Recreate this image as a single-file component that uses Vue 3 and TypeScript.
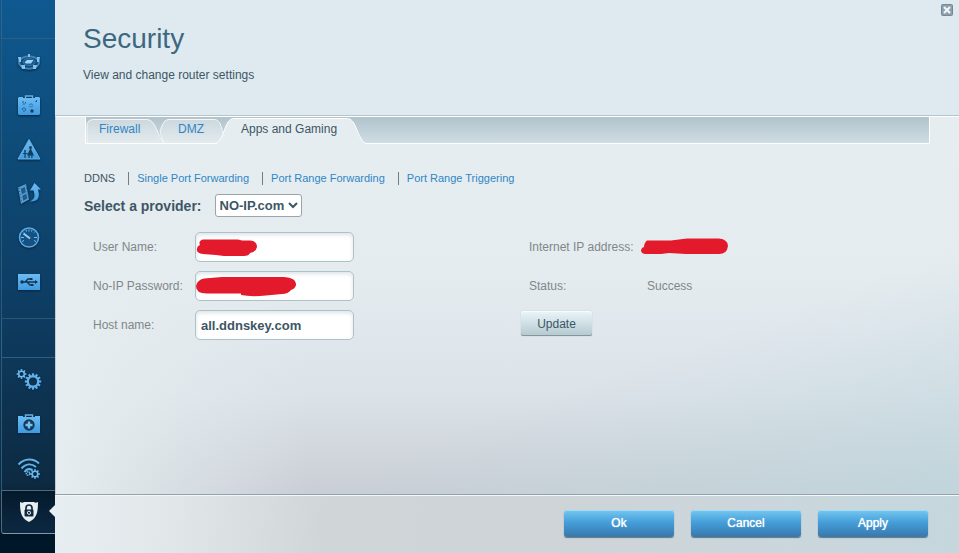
<script setup lang="ts">
import { ref } from 'vue'

const tabs = ['Firewall', 'DMZ', 'Apps and Gaming']
const tabKeys = ['firewall', 'dmz', 'apps']
const activeTab = ref(2)

const sections = ['DDNS', 'Single Port Forwarding', 'Port Range Forwarding', 'Port Range Triggering']
const activeSection = ref(0)

const provider = ref('NO-IP.com')
const userName = ref('')
const password = ref('')
const hostName = ref('all.ddnskey.com')
const status = ref('Success')

const bigTeeth = Array.from({ length: 12 }, (_, i) => i * 30)
const smallTeeth = Array.from({ length: 8 }, (_, i) => i * 45)
</script>

<template>
  <div class="shell">
    <svg class="defs" aria-hidden="true">
      <defs>
        <linearGradient id="ice" x1="0" y1="0" x2="0" y2="1">
          <stop offset="0" stop-color="#6cbcf4" />
          <stop offset="1" stop-color="#3f9be0" />
        </linearGradient>
        <linearGradient id="tabFill" x1="0" y1="0" x2="0" y2="1">
          <stop offset="0" stop-color="#ccd8de" />
          <stop offset="1" stop-color="#e3ebee" />
        </linearGradient>
        <g id="gearBig">
          <rect v-for="a in bigTeeth" :key="a" x="-1.1" y="-8.2" width="2.2" height="3" :transform="`rotate(${a})`" fill="#5fb0ea" />
          <circle r="5.2" fill="none" stroke="#5fb0ea" stroke-width="2.4" />
        </g>
        <g id="gearSmall">
          <rect v-for="a in smallTeeth" :key="a" x="-0.8" y="-4.9" width="1.6" height="2.2" :transform="`rotate(${a})`" fill="#6cb8ee" />
          <circle r="2.8" fill="none" stroke="#6cb8ee" stroke-width="1.6" />
        </g>
      </defs>
    </svg>

    <nav class="sidebar" aria-label="Router">
      <div class="spacer"></div>
      <div class="group tools">
        <a href="#" aria-label="Network map">
          <svg width="26" height="26" viewBox="0 0 26 26">
            <ellipse cx="13" cy="13.500" rx="10" ry="6.200" fill="#12497a" stroke="#3f83b6" stroke-width="2" />
            <ellipse cx="13" cy="13" rx="6" ry="3.500" fill="#1b598d" stroke="#3579ad" />
            <path d="M8.500 13.500l2.500-2.500h6.500l-2.500 3.500H10z" fill="#9bd4f8" />
            <path d="M2 8h3v5H3zM21 8h3l-1 5h-2zM12 5h2v3h-2zM5 16h4v4H6zM17 16h4l-1 4h-3z" fill="#81c3ef" />
          </svg>
        </a>
        <a href="#" aria-label="Guest access">
          <svg width="26" height="26" viewBox="0 0 26 26">
            <path d="M9.500 5v-2h7v2" fill="none" stroke="#65b1e7" stroke-width="1.400" />
            <path d="M3 4h4v1h12V4h4l1 1v16l-1 1H3l-1-1V5z" fill="url(#ice)" />
            <path d="M6 9h3l1 1-1 1H6M7 15h2.500v3H7l-1-3M15 10.500l2 2-2 2-2-2z" fill="none" stroke="#1b6297" stroke-width="1" stroke-dasharray="2 1" />
            <circle cx="16" cy="18" r="1.700" fill="#153e5e" />
            <path d="M19 8.500l2-1.500v2z" fill="#153e5e" />
          </svg>
        </a>
        <a href="#" aria-label="Parental controls">
          <svg width="26" height="26" viewBox="0 0 26 26">
            <path d="M13 2.500L24 22H2z" fill="url(#ice)" stroke="#65b1e7" stroke-linejoin="round" />
            <circle cx="14.500" cy="10.500" r="1.500" fill="#153e5e" />
            <path d="M14 12h1l3 6.500h-1.500V21h-1.200v-2.500h-1.600V21h-1.200v-2.500H11z" fill="#153e5e" />
            <circle cx="9" cy="14" r="1" fill="#153e5e" />
            <path d="M9 15v6M7 16.500h4.500" stroke="#153e5e" stroke-width="1.200" />
          </svg>
        </a>
        <a href="#" aria-label="Media prioritization">
          <svg width="26" height="26" viewBox="0 0 26 26">
            <path d="M2 6.500L10 3l3 15.500L5 23z" fill="#579dd0" />
            <path d="M4.800 7.800l4-1.900 1.100 5.300-4 2zM6.200 14.800l4-2 1.100 4.700-4 2.200z" fill="#215b89" />
            <path d="M3 7l3 15M10 4l3 14" stroke="#1f608f" stroke-dasharray="1 2" />
            <path d="M14 20.500c9 .5 10-5 8-12h3L18.500 2 14 9.500h3.500c2 6 1 8.500-3.500 11z" fill="url(#ice)" />
          </svg>
        </a>
        <a href="#" aria-label="Speed test">
          <svg width="26" height="26" viewBox="0 0 26 26">
            <circle cx="13" cy="12.500" r="9.500" fill="#155282" stroke="#57aae4" stroke-width="1.600" />
            <path d="M5 12.500h3M18 12.500h3M13 4.500v2M7 6.500l1 1M19 6.500l-1 1M6 16.500l2-1M20 16.500l-2-1M10 5l.5 1.500M16 5l-.5 1.500" stroke="#73bdf0" />
            <path d="M7.500 8.500L14 13.500" stroke="#92d0f8" stroke-width="2" />
          </svg>
        </a>
        <a href="#" aria-label="USB storage">
          <svg width="26" height="26" viewBox="0 0 26 26">
            <path d="M2 5h22v16H2z" fill="url(#ice)" />
            <path d="M5 13h15M9 13l3-3h3M11 13l3 3h2" fill="none" stroke="#12344f" stroke-width="1.300" />
            <circle cx="6" cy="13" r="1.700" fill="#12344f" />
            <path d="M19 11l3 2-3 2zM14 9h2.500v2H14zM15 15h2.500v2H15z" fill="#12344f" />
          </svg>
        </a>
      </div>
      <div class="spacer"></div>
      <div class="group">
        <a href="#" aria-label="Connectivity">
          <svg width="26" height="26" viewBox="0 0 26 26">
            <use href="#gearSmall" x="5.500" y="7" />
            <use href="#gearBig" x="17" y="14.500" />
          </svg>
        </a>
        <a href="#" aria-label="Troubleshooting">
          <svg width="26" height="26" viewBox="0 0 26 26">
            <path d="M9.500 6V4h7v2" fill="none" stroke="#65b1e7" stroke-width="1.500" />
            <path d="M2 5h5v1h12V5h5v17H2z" fill="url(#ice)" />
            <circle cx="13" cy="14" r="5.700" fill="#133a5a" />
            <path d="M13 10.500v7M9.500 14h7" stroke="#75bff2" stroke-width="2.400" />
          </svg>
        </a>
        <a href="#" aria-label="Wireless">
          <svg width="26" height="26" viewBox="0 0 26 26">
            <path d="M2.500 9.500c6-6.500 15-6.500 20.500-1M5.500 13.500c4.500-5 10-5 14.500-1.500M8.500 17c2-3 5-3.500 8-2" fill="none" stroke="#64b1e9" stroke-width="2" />
            <circle cx="12" cy="18.500" r="1.700" fill="none" stroke="#64b1e9" stroke-width="1.500" stroke-dasharray="1.500 .5" />
            <use href="#gearSmall" x="19" y="19" />
          </svg>
        </a>
      </div>
      <a class="current" href="#" aria-label="Security" aria-current="page">
        <svg width="26" height="26" viewBox="0 0 26 26">
          <path d="M4 3c2 1 3 1 4 0h10c1 1 2 1 4 0 0 10-1 16-9 20C5 19 4 13 4 3z" fill="#e9eef1" />
          <path d="M10 11V9c0-4 6-4 6 0v2" fill="none" stroke="#102b40" stroke-width="1.700" />
          <rect x="8.500" y="10.500" width="9" height="7" rx="1" fill="#102b40" />
          <circle cx="13" cy="13.800" r="1.600" fill="none" stroke="#e9eef1" />
        </svg>
      </a>
    </nav>

    <main class="panel">
      <header class="head">
        <h1>Security</h1>
        <p>View and change router settings</p>
        <button class="close" type="button" aria-label="Close">
          <svg width="12" height="12" viewBox="0 0 12 12">
            <rect x=".5" y=".5" width="11" height="11" rx="1" fill="#8ea1ac" stroke="#72889a" />
            <path d="M3 3l6 6M9 3L3 9" stroke="#f1f6f8" stroke-width="2.200" />
          </svg>
        </button>
      </header>

      <section class="body">
        <div class="tabs" role="tablist">
          <button
            v-for="(tab, i) in tabs"
            :key="tab"
            type="button"
            role="tab"
            class="tab"
            :class="[tabKeys[i], { selected: activeTab === i }]"
            :aria-selected="activeTab === i"
            @click="activeTab = i"
          >
            <svg v-if="i === 0" class="shape" width="80" height="26" viewBox="0 0 80 26">
              <path d="M1 26V9Q1 2.500 8 2.500H61C70 2.500 71 19 78 26z" fill="url(#tabFill)" />
              <path d="M1 26V9Q1 2.500 8 2.500H61C70 2.500 71 19 78 26" fill="none" stroke="#f3f7f9" />
            </svg>
            <svg v-else-if="i === 1" class="shape" width="68" height="26" viewBox="0 0 68 26">
              <path d="M5 26Q2 21 1 14C4 6 5 2.500 11 2.500H55C61 2.500 62 9 64 16L66 26z" fill="url(#tabFill)" />
              <path d="M5 26Q2 21 1 14C4 6 5 2.500 11 2.500H55C61 2.500 62 9 64 16" fill="none" stroke="#f3f7f9" />
            </svg>
            <svg v-else class="shape" width="148" height="27" viewBox="0 0 148 27">
              <path d="M0 27V25.500C8 22 7 1.500 17 1.500H130C139 1.500 139 17 147 25.500H148V27z" fill="#e6edf0" />
              <path d="M0 25.500C8 22 7 1.500 17 1.500H130C139 1.500 139 17 147 25.500H148" fill="none" stroke="#fff" />
            </svg>
            <span>{{ tab }}</span>
          </button>
        </div>

        <nav class="sections" aria-label="Apps and Gaming">
          <a
            v-for="(s, i) in sections"
            :key="s"
            href="#"
            :class="{ here: activeSection === i }"
            @click.prevent="activeSection = i"
          >{{ s }}</a>
        </nav>

        <div class="provider">
          <label for="provider">Select a provider:</label>
          <select id="provider" v-model="provider">
            <option>NO-IP.com</option>
          </select>
        </div>

        <form class="form" @submit.prevent>
          <div class="fields">
            <label for="user">User Name:</label>
            <div class="field">
              <input id="user" v-model="userName" type="text" />
              <svg class="mark" width="64" height="20" viewBox="0 0 64 20">
                <path d="M7 1.500H42L46 2.500H54Q61 3 61 9 60 14 54 15 53 18 48 18H28L20 17 7 16Q0 15 1 11 1 8 4 7 2 3 7 1.500z" fill="#e3192c" />
              </svg>
            </div>
            <label for="pass">No-IP Password:</label>
            <div class="field">
              <input id="pass" v-model="password" type="password" />
              <svg class="mark" width="102" height="20" viewBox="0 0 102 20">
                <path d="M8 1.500L26 0H88Q101 1 100 8 99 12 95 13 92 17 86 17L70 18.500Q55 20 45 18V16.500H12Q0 17 0 9 1 3 8 1.500z" fill="#e3192c" />
              </svg>
            </div>
            <label for="host">Host name:</label>
            <div class="field">
              <input id="host" v-model="hostName" type="text" />
            </div>
          </div>

          <div class="info">
            <div class="row">
              <span class="key">Internet IP address:</span>
              <svg width="88" height="18" viewBox="0 0 88 18">
                <path d="M6 2.500L30 2.500 46 .5H78Q87 1.500 87 8 86 16 78 16H45L28 15 20 16H5Q0 16 0 12 1 9 3 9 3 5 6 2.500z" fill="#e3192c" />
              </svg>
            </div>
            <div class="row">
              <span class="key">Status:</span>
              <span class="value">{{ status }}</span>
            </div>
            <button class="update" type="button">Update</button>
          </div>
        </form>
      </section>

      <footer class="foot">
        <button type="button">Ok</button>
        <button type="button">Cancel</button>
        <button type="button">Apply</button>
      </footer>
    </main>
  </div>
</template>

<style>
body {
  margin: 0;
}
</style>

<style scoped>
.shell {
  display: flex;
  min-height: 100vh;
  font: 12px/16px "Liberation Sans", Arial, sans-serif;
  color: #3d5665;
}
.shell *,
.shell {
  box-sizing: border-box;
}
.defs {
  position: absolute;
  width: 0;
  height: 0;
}
button,
input,
select {
  font-family: inherit;
}
button {
  cursor: pointer;
}

.sidebar {
  flex: none;
  display: flex;
  flex-direction: column;
  width: 55px;
  padding-left: 1px;
  background: linear-gradient(#0f5990 0, #0e4c7a 140px, #0e3d63 300px, #0d2b43 480px, #001729 534px);
}
.spacer {
  height: 39px;
  border-left: 1px solid #2e648a;
  border-bottom: 1px solid #2b5f85;
}
.group {
  border-left: 1px solid #2b5a7b;
  border-bottom: 1px solid #50697b;
}
.tools {
  padding: 1px 0 14px;
  border-bottom-color: #2c5676;
}
.group a,
.current {
  display: flex;
  align-items: center;
  justify-content: center;
  height: 44px;
}
.group svg {
  filter: drop-shadow(0 1px 1px #06233b);
}
.current {
  position: relative;
  height: 43px;
  border-left: 1px solid #51697a;
  border-bottom: 1px solid #8796a0;
  border-bottom-left-radius: 3px;
  background: linear-gradient(#041a2c, #0c2942);
}
.current::after {
  content: "";
  position: absolute;
  right: 0;
  top: 14px;
  border: 6px solid transparent;
  border-left: 0;
  border-right-color: #e9eef1;
}

.panel {
  flex: 1;
  display: flex;
  flex-direction: column;
  min-width: 0;
}
.head {
  position: relative;
  height: 116px;
  padding: 23px 28px 0;
  border-bottom: 1px solid #b7c4ca;
  background: #dfeaf0;
}
h1 {
  margin: 0;
  font-size: 28px;
  line-height: 32px;
  font-weight: 400;
  color: #3d677f;
}
.head p {
  margin: 12px 0 0;
}
.close {
  position: absolute;
  top: 4px;
  right: 6px;
  display: flex;
  padding: 0;
  border: 0;
  background: none;
}

.body {
  flex: 1;
  padding: 0 29px;
  border-top: 1px solid #fff;
  border-left: 1px solid #c3cbcf;
  background:
    linear-gradient(90deg, #e5edf0, rgba(229, 237, 240, 0) 28%),
    linear-gradient(160deg, rgba(190, 216, 223, 0) 65%, rgba(190, 216, 223, 0.7) 100%),
    linear-gradient(#e6edf0 0, #e5ecef 40%, #e1e8ed 56%, #dbe2e8 74%, #c9ced4 100%);
}
.tabs {
  display: flex;
  height: 27px;
  border: 1px solid #fff;
  border-top: 0;
  background: linear-gradient(#b1c3cb, #cfdde4);
}
.tab {
  position: relative;
  height: 27px;
  padding: 0 0 2px;
  border: 0;
  background: none;
  font-size: 12px;
  line-height: 25px;
  color: #2f86c6;
  text-align: left;
}
.tab span {
  position: relative;
}
.tab.selected {
  color: #3d5665;
  z-index: 1;
}
.shape {
  position: absolute;
  left: 0;
  top: 0;
}
.firewall {
  width: 73px;
  padding-left: 13px;
}
.dmz {
  width: 58px;
  padding-left: 19px;
}
.apps {
  width: 148px;
  padding-left: 24px;
}

.sections {
  display: flex;
  margin-top: 28px;
  margin-left: -1px;
  font-size: 11px;
  line-height: 13px;
}
.sections a {
  margin-right: 13px;
  color: #2f86c6;
  text-decoration: none;
}
.sections a + a {
  padding-left: 8px;
  border-left: 1px solid #717d84;
}
.sections .here {
  color: #3d5665;
}

.provider {
  display: flex;
  align-items: center;
  gap: 13px;
  margin-top: 9px;
  margin-left: -1px;
  font-size: 14px;
  font-weight: 700;
}
.provider select {
  width: 87px;
  height: 23px;
  padding: 0;
  border: 1px solid #9ba4a9;
  border-radius: 3px;
  background-color: #fff;
  color: #3d5665;
  font-size: 13px;
  font-weight: 700;
}

.form {
  display: grid;
  grid-template-columns: 428px 1fr;
  margin-top: 15px;
  padding-left: 8px;
  color: #818789;
}
.fields {
  display: grid;
  grid-template-columns: 102px 159px;
  row-gap: 9px;
  align-items: center;
  align-content: start;
}
.field {
  position: relative;
}
.field input {
  display: block;
  width: 100%;
  height: 30px;
  padding: 0 5px;
  border: 1px solid #afc1c8;
  border-radius: 5px;
  background: #fff;
  box-shadow: inset 0 2px 4px #dce3e6;
  color: #3d5665;
  font-size: 13px;
  font-weight: 700;
}
.mark {
  position: absolute;
  left: 1px;
  top: 6px;
}
.info {
  padding-left: 8px;
}
.row {
  display: flex;
  align-items: center;
  height: 30px;
  margin-bottom: 9px;
}
.key {
  width: 112px;
}
.value {
  margin-left: 6px;
}
.update {
  display: block;
  width: 71px;
  height: 25px;
  margin: 10px 0 0 -8px;
  padding: 0;
  border: 0;
  border-radius: 2px;
  background: linear-gradient(#eaf5f7, #cfe0e5 50%, #b4c8cf);
  box-shadow: inset 0 1px #f6fbfc, inset 0 -1px #84959d, 0 0 1px #93a5ad;
  color: #3d5665;
  font-size: 12px;
}

.foot {
  display: flex;
  justify-content: flex-end;
  gap: 17px;
  height: 59px;
  padding: 15px 31px 0 0;
  border-top: 1px solid #92a3ae;
  background: linear-gradient(95deg, #e7eef1, #e2e7ea 12%, #d0d5d8 30%, #ced4d8 55%, #c9d7dd 85%, #c5d6dd);
  box-shadow: inset 0 1px #f3f7f9;
}
.foot button {
  width: 110px;
  height: 27px;
  padding: 0 0 2px;
  border: 0;
  border-radius: 3px;
  background: linear-gradient(#75c8ee, #459fdb 45%, #3777ac);
  box-shadow: inset 0 1px #a0dcf5, 0 1px 1px #67757e;
  color: #fff;
  font-size: 12px;
  text-shadow: 0 0 1px #fff;
}
</style>
